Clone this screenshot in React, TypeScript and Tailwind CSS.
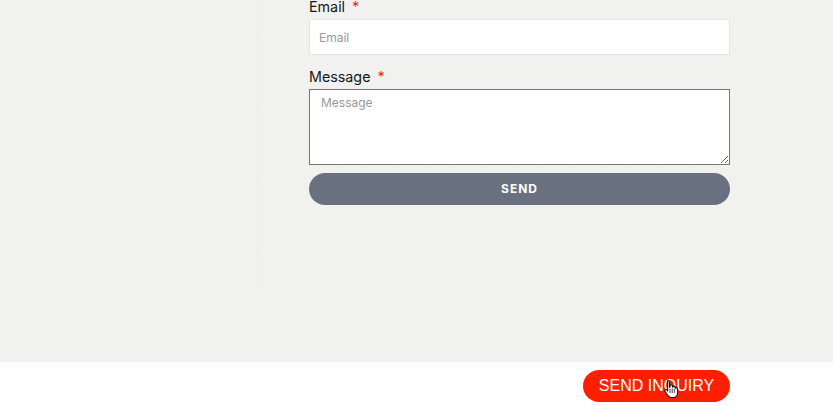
import { useState } from 'react';

const HandCursor = () => (
  <svg width="14" height="20" viewBox="0 0 14 20" className="absolute left-[81px] top-[9px]">
    <path
      d="M4 1.500c.8 0 1.400.6 1.400 1.400v5.200l.6-.1V7c0-.7.6-1.200 1.200-1.200s1.200.5 1.200 1.200v1l.5.100c.1-.6.6-1 1.200-1 .6 0 1.100.5 1.100 1.100v1l.3.100c.2-.4.6-.6 1-.6.6 0 1 .5 1 1.100v4.200c0 2.400-1.600 4.500-4.100 4.500H7.200c-1.500 0-2.500-.7-3.300-2L1 12.300c-.4-.6-.2-1.300.3-1.600.5-.3 1.100-.2 1.500.3l.8 1V2.900c0-.8-.2-1.400.4-1.400z"
      fill="#fff"
      stroke="#111"
      strokeWidth="1.100"
      strokeLinejoin="round"
    />
    <path d="M6 9.500v4.500M8.200 9.500v4.500M10.300 9.800v4.200" stroke="#111" strokeWidth=".8" />
  </svg>
);

export default function App() {
  const [email, setEmail] = useState('');
  const [message, setMessage] = useState('');

  return (
    <div className="h-[406px] w-[833px] overflow-hidden bg-[#f1f1ef] font-['Inter',sans-serif]">
      <div className="flex h-[362px] overflow-hidden bg-[radial-gradient(#f7f7f5_0.6px,transparent_0.8px)] bg-[length:11px_9px]">
        <div className="ml-[257px] h-[288px] w-px bg-[#ecece9]" />
        <form className="ml-[51px] mt-[-5px] flex w-[421px] flex-col" onSubmit={(e) => e.preventDefault()}>
          <label className="flex h-[24px] items-center text-[14.3px] leading-6 text-[#16181d]">
            Email <span className="ml-[7px] text-[#f5222d]">*</span>
          </label>
          <input
            value={email}
            onChange={(e) => setEmail(e.target.value)}
            placeholder="Email"
            className="h-[36px] w-full border border-[#e4e4e2] bg-white px-[9px] text-[12px] outline-none placeholder:text-[#999999]"
          />
          <label className="mt-[10px] flex h-[24px] items-center text-[14.3px] leading-6 text-[#16181d]">
            Message <span className="ml-[7px] text-[#f5222d]">*</span>
          </label>
          <textarea
            value={message}
            onChange={(e) => setMessage(e.target.value)}
            placeholder="Message"
            className="h-[76px] w-full resize border border-[#767676] bg-white px-[11px] py-[4px] text-[12px] leading-[18px] outline-none placeholder:text-[#999999]"
          />
          <button
            type="submit"
            className="mt-[8px] h-[32px] w-full rounded-full bg-[#697180] text-[12px] font-bold tracking-[0.08em] text-white"
          >
            SEND
          </button>
        </form>
      </div>
      <div className="flex h-[44px] items-start justify-end bg-white pr-[103px] pt-[8px]">
        <button
          type="button"
          className="relative h-[32px] w-[147px] rounded-full bg-[#ff1f00] font-['Liberation_Sans',sans-serif] text-[16px] leading-[32px] text-white"
        >
          SEND INQUIRY
          <HandCursor />
        </button>
      </div>
    </div>
  );
}
